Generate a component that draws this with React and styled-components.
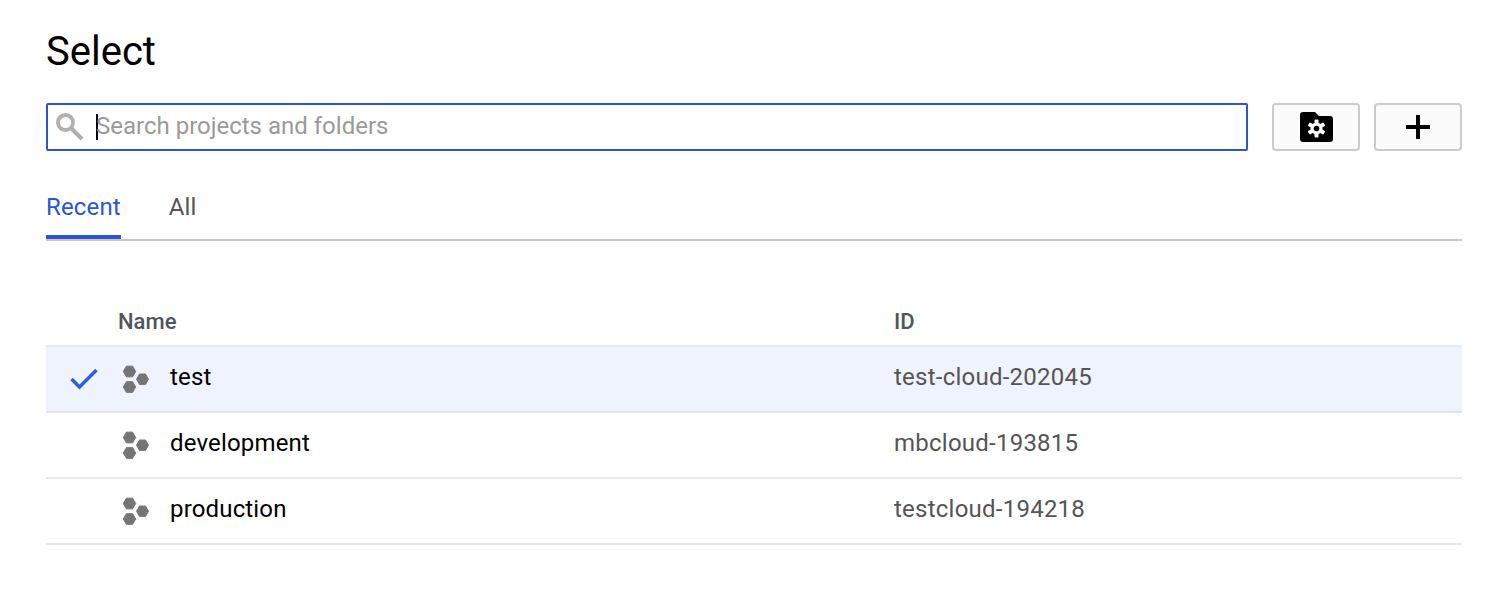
import React from "react";
import styled, { createGlobalStyle } from "styled-components";

const Global = createGlobalStyle`
  html, body { margin: 0; padding: 0; background: #fff; }
  body { font-family: Roboto, "Liberation Sans", sans-serif; }
`;

const Page = styled.div`
  width: 1510px;
  height: 604px;
  box-sizing: border-box;
  padding: 28px 48px 0 46px;
  overflow: hidden;
`;

const Title = styled.h1`
  margin: 0;
  height: 47px;
  font-size: 40px;
  line-height: 47px;
  font-weight: 400;
  color: #000;
`;

const Toolbar = styled.div`
  margin-top: 28px;
  display: flex;
  align-items: stretch;
  height: 48px;
`;

const SearchBox = styled.div`
  width: 1202px;
  box-sizing: border-box;
  border: 2px solid #2a56d6;
  border-radius: 2px;
  display: flex;
  align-items: center;
  padding-left: 8px;
  margin-right: 24px;
`;

const Caret = styled.span`
  width: 2px;
  height: 26px;
  background: #000;
  margin-left: 12px;
  margin-right: -2px;
`;

const Placeholder = styled.span`
  font-size: 24px;
  color: #9a9a9a;
  line-height: 28px;
  margin-bottom: 2px;
`;

const IconButton = styled.div`
  width: 88px;
  box-sizing: border-box;
  border: 2px solid #cbcbcb;
  border-radius: 4px;
  background: #fbfbfb;
  display: flex;
  align-items: center;
  justify-content: center;
  margin-right: ${(p) => (p.$last ? 0 : "14px")};
`;

const Tabs = styled.div`
  margin-top: 32px;
  display: flex;
  gap: 48px;
  height: 56px;
  border-bottom: 2px solid #c8c8c8;
`;

const Tab = styled.div`
  font-size: 24px;
  letter-spacing: 0.15px;
  line-height: 48px;
  height: 52px;
  color: ${(p) => (p.$active ? "#2a56d6" : "#555")};
  border-bottom: ${(p) => (p.$active ? "4px solid #2a56d6" : "none")};
`;

const Table = styled.div`
  margin-top: 62px;
`;

const HeaderRow = styled.div`
  display: grid;
  grid-template-columns: 72px 776px 1fr;
  height: 44px;
  padding-bottom: 6px;
  align-items: center;
  font-size: 22px;
  font-weight: 500;
  color: #4f5559;
  border-bottom: 2px solid #e6e9f2;
  box-sizing: border-box;
`;

const Row = styled.div`
  display: grid;
  grid-template-columns: 72px 52px 724px 1fr;
  height: 66px;
  padding-bottom: 4px;
  box-sizing: border-box;
  align-items: center;
  background: ${(p) => (p.$selected ? "#eff3fd" : "transparent")};
  border-bottom: 2px solid ${(p) => (p.$selected ? "#dfe4f2" : "#e8e8e8")};
`;

const CheckCell = styled.div`
  display: flex;
  justify-content: flex-end;
  padding-right: 20px;
  padding-top: 4px;
`;

const IconCell = styled.div`
  display: flex;
  align-items: center;
  padding-left: 5px;
  padding-top: 4px;
`;

const NameCell = styled.div`
  font-size: 24px;
  letter-spacing: 0.16px;
  color: #000;
`;

const IdCell = styled.div`
  font-size: 24px;
  letter-spacing: 0.24px;
  color: #555;
`;

const Cell = styled.div``;

const SearchIcon = () => (
  <svg width="28" height="28" viewBox="0 0 28 28" fill="none" stroke="#b0b0b0">
    <circle cx="9.5" cy="9.5" r="7.5" strokeWidth="3.8" />
    <path d="M15 15 L26 26" strokeWidth="4.2" />
  </svg>
);

const FolderGear = () => (
  <svg width="33" height="30" viewBox="0 0 33 30">
    <path fill="#000" d="M3 0h12l4 4h11a3 3 0 0 1 3 3v20a3 3 0 0 1-3 3H3a3 3 0 0 1-3-3V3a3 3 0 0 1 3-3z" />
    <g fill="#fff" transform="translate(16.5 16.5)">
      <circle r="6" />
      {[0, 60, 120, 180, 240, 300].map((a) => (
        <rect key={a} x="-2" y="-9" width="4" height="5" rx="1" transform={`rotate(${a})`} />
      ))}
    </g>
    <circle cx="16.5" cy="16.5" r="2.8" fill="#000" />
  </svg>
);

const Plus = () => (
  <svg width="24" height="24" viewBox="0 0 24 24">
    <path d="M10 0h4v10h10v4H14v10h-4V14H0v-4h10z" fill="#000" />
  </svg>
);

const Check = () => (
  <svg width="28" height="22" viewBox="0 0 28 22" fill="none">
    <path d="M1.5 11 L9.5 19 L26.5 2" stroke="#2a60e0" strokeWidth="3.4" />
  </svg>
);

const hex = (cx, cy, r) => {
  const pts = [];
  for (let i = 0; i < 6; i++) {
    const a = (Math.PI / 3) * i;
    pts.push(`${(cx + r * Math.cos(a)).toFixed(2)},${(cy + r * Math.sin(a)).toFixed(2)}`);
  }
  return pts.join(" ");
};

const ProjectIcon = () => (
  <svg width="26" height="28" viewBox="0 0 26 28" fill="#757575" stroke="#757575" strokeWidth="1" strokeLinejoin="round">
    <polygon points={hex(6.5, 6.5, 6.2)} />
    <polygon points={hex(6.5, 22, 6.2)} />
    <polygon points={hex(19.5, 14.2, 6)} />
  </svg>
);

const rows = [
  { name: "test", id: "test-cloud-202045", selected: true },
  { name: "development", id: "mbcloud-193815" },
  { name: "production", id: "testcloud-194218" },
];

export default function App() {
  return (
    <Page>
      <Global />
      <Title>Select</Title>
      <Toolbar>
        <SearchBox>
          <SearchIcon />
          <Caret />
          <Placeholder>Search projects and folders</Placeholder>
        </SearchBox>
        <IconButton><FolderGear /></IconButton>
        <IconButton $last><Plus /></IconButton>
      </Toolbar>
      <Tabs>
        <Tab $active>Recent</Tab>
        <Tab>All</Tab>
      </Tabs>
      <Table>
        <HeaderRow>
          <Cell />
          <Cell>Name</Cell>
          <Cell>ID</Cell>
        </HeaderRow>
        {rows.map((r) => (
          <Row key={r.id} $selected={r.selected}>
            <CheckCell>{r.selected && <Check />}</CheckCell>
            <IconCell><ProjectIcon /></IconCell>
            <NameCell>{r.name}</NameCell>
            <IdCell>{r.id}</IdCell>
          </Row>
        ))}
      </Table>
    </Page>
  );
}
